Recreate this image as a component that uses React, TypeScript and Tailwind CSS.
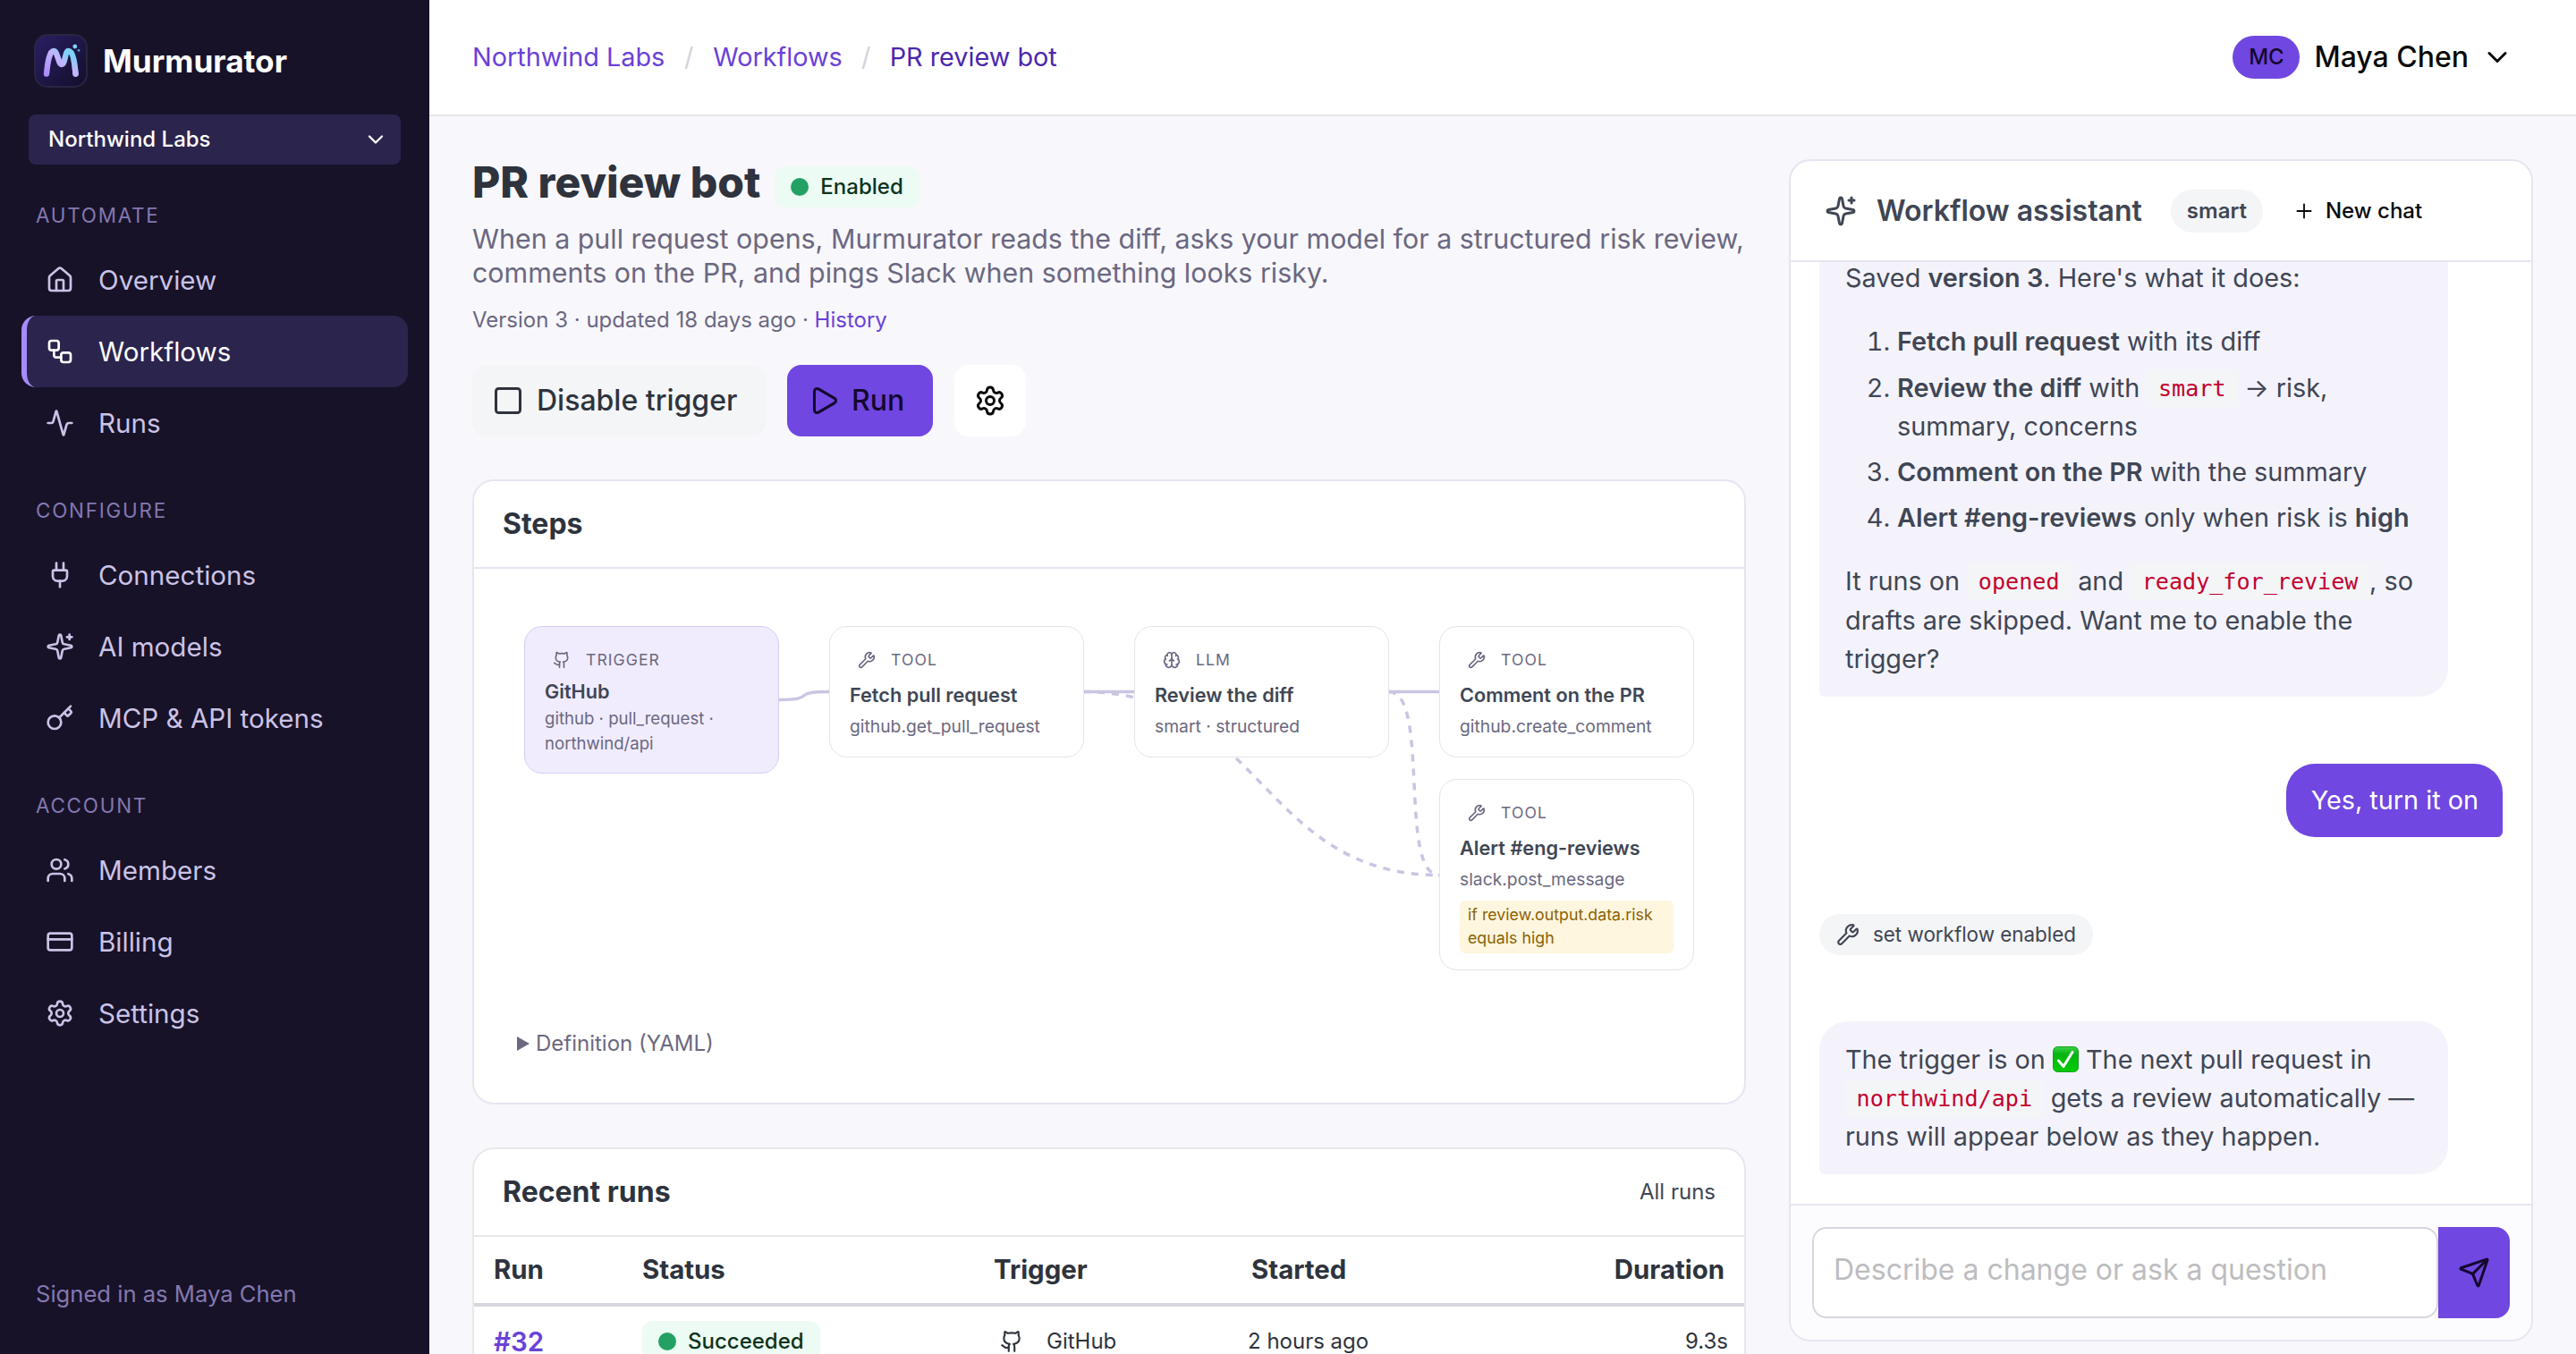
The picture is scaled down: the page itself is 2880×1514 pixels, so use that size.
import React from "react";
import {
  Activity,
  Brain,
  ChevronDown,
  CreditCard,
  Github,
  House,
  Key,
  Play,
  Plug,
  Plus,
  Send,
  Settings,
  Square,
  Users,
  Workflow,
  Wrench,
} from "lucide-react";

interface IconProps {
  className?: string;
}

const Sparkle: React.FC<IconProps> = ({ className }) => (
  <svg viewBox="0 0 24 24" fill="none" stroke="currentColor" strokeWidth={2} strokeLinecap="round" strokeLinejoin="round" className={className}>
    <path d="M11.017 2.814a1 1 0 0 1 1.966 0l1.051 5.558a2 2 0 0 0 1.594 1.594l5.558 1.051a1 1 0 0 1 0 1.966l-5.558 1.051a2 2 0 0 0-1.594 1.594l-1.051 5.558a1 1 0 0 1-1.966 0l-1.051-5.558a2 2 0 0 0-1.594-1.594l-5.558-1.051a1 1 0 0 1 0-1.966l5.558-1.051a2 2 0 0 0 1.594-1.594z" />
    <path d="M20 2v4" />
    <path d="M22 4h-4" />
  </svg>
);

const Logo: React.FC<IconProps> = ({ className }) => (
  <svg viewBox="0 0 60 60" fill="none" className={className}>
    <defs>
      <linearGradient id="logo-bg" x1="0" y1="0" x2="1" y2="1">
        <stop offset="0" stopColor="#2a1f63" />
        <stop offset="1" stopColor="#130e2b" />
      </linearGradient>
      <linearGradient id="logo-m" x1="14" y1="46" x2="46" y2="16" gradientUnits="userSpaceOnUse">
        <stop offset="0" stopColor="#a98bfa" />
        <stop offset="0.5" stopColor="#c3b5fb" />
        <stop offset="0.75" stopColor="#7fd0f8" />
        <stop offset="1" stopColor="#7dd3fc" />
      </linearGradient>
      <linearGradient id="logo-leg" x1="0" y1="20" x2="0" y2="46" gradientUnits="userSpaceOnUse">
        <stop offset="0.2" stopColor="#c4b5fd" stopOpacity="0" />
        <stop offset="1" stopColor="#c4b5fd" />
      </linearGradient>
    </defs>
    <rect x="1" y="1" width="58" height="58" rx="14" fill="url(#logo-bg)" stroke="#2a2541" strokeWidth="2" />
    <path d="M14 44.500C15 34 17 19 22 19C26.500 19 27 34 31 34C35 34 34.500 19 38.500 19C44 19 45.500 34 46.500 44.500" stroke="url(#logo-m)" strokeWidth="6.400" strokeLinecap="round" />
    <path d="M38.500 19C44 19 45.500 34 46.500 44.500" stroke="url(#logo-leg)" strokeWidth="6.400" strokeLinecap="round" />
    <circle cx="45.800" cy="14" r="2.400" fill="#7dd3fc" />
    <circle cx="50" cy="18.300" r="1.400" fill="#5a9fcb" />
  </svg>
);

const navSections = [
  {
    title: "Automate",
    items: [
      { label: "Overview", icon: House, active: false },
      { label: "Workflows", icon: Workflow, active: true },
      { label: "Runs", icon: Activity, active: false },
    ],
  },
  {
    title: "Configure",
    items: [
      { label: "Connections", icon: Plug, active: false },
      { label: "AI models", icon: Sparkle, active: false },
      { label: "MCP & API tokens", icon: Key, active: false },
    ],
  },
  {
    title: "Account",
    items: [
      { label: "Members", icon: Users, active: false },
      { label: "Billing", icon: CreditCard, active: false },
      { label: "Settings", icon: Settings, active: false },
    ],
  },
];

const Sidebar: React.FC = () => (
  <aside className="flex w-[480px] shrink-0 flex-col bg-[#171228]">
    <div className="flex h-32 items-center gap-[17px] pt-2 pl-[38px]">
      <Logo className="h-[60px] w-[60px]" />
      <span className="text-[35.2px] font-bold text-white">Murmurator</span>
    </div>
    <button className="mx-8 flex h-14 items-center justify-between rounded-lg bg-[#2b244d] pr-[14px] pl-[22px] text-left text-[24px] font-medium text-white">
      Northwind Labs
      <ChevronDown className="h-7 w-7" />
    </button>
    <nav className="flex flex-col">
      {navSections.map((section) => (
        <div key={section.title} className="mb-px">
          <h2 className="flex h-[89px] items-center pt-[25px] pl-10 text-[22.4px] tracking-[0.08em] text-[#8478b0] uppercase">
            {section.title}
          </h2>
          {section.items.map(({ label, icon: Icon, active }) => (
            <a
              key={label}
              className={`mr-6 ml-6 flex h-20 items-center gap-[27px] border-l-[6px] pl-[21px] text-[29.6px] ${
                active
                  ? "rounded-2xl border-[#a78bfa] bg-[#2b244d] text-white"
                  : "border-transparent text-[#cbc3e6]"
              }`}
            >
              <Icon className="h-8 w-8" />
              {label}
            </a>
          ))}
        </div>
      ))}
    </nav>
    <div className="mt-auto pb-[49px] pl-10 text-[25.6px] leading-9 text-[#8478b0]">Signed in as Maya Chen</div>
  </aside>
);

const Topbar: React.FC = () => (
  <header className="flex h-[130px] shrink-0 items-center justify-between border-b-2 border-[#e6e6ea] bg-white pr-[70px] pl-12">
    <nav className="flex items-center text-[28.8px] text-[#6a41d8]">
      <a>Northwind Labs</a>
      <span className="w-[54px] text-center text-[#d3d3da]">/</span>
      <a>Workflows</a>
      <span className="w-[53px] text-center text-[#d3d3da]">/</span>
      <a className="text-[#4a27ad]">PR review bot</a>
    </nav>
    <div className="flex items-center text-[32px] font-medium text-[#0a0a0a]">
      <span className="mr-4 flex h-12 w-[75px] items-center justify-center rounded-full bg-[#7047e0] text-[24px] text-[#14082f]">
        MC
      </span>
      Maya Chen
      <ChevronDown className="ml-[14px] h-9 w-9" />
    </div>
  </header>
);

interface StepNode {
  id: string;
  kind: string;
  icon: React.ElementType;
  name: string;
  detail: string;
  condition?: string;
  position: string;
}

// positions on the step canvas
const stepNodes: StepNode[] = [
  { id: "trigger", kind: "Trigger", icon: Github, name: "GitHub", detail: "github · pull_request · northwind/api", position: "left-[56px] top-16 h-[165px] bg-[#f0ecfe] border-[#d5cff2]" },
  { id: "fetch", kind: "Tool", icon: Wrench, name: "Fetch pull request", detail: "github.get_pull_request", position: "left-[397px] top-16 h-[147px] bg-white border-[#e5e5ea]" },
  { id: "review", kind: "LLM", icon: Brain, name: "Review the diff", detail: "smart · structured", position: "left-[738px] top-16 h-[147px] bg-white border-[#e5e5ea]" },
  { id: "comment", kind: "Tool", icon: Wrench, name: "Comment on the PR", detail: "github.create_comment", position: "left-[1079px] top-16 h-[147px] bg-white border-[#e5e5ea]" },
  { id: "alert", kind: "Tool", icon: Wrench, name: "Alert #eng-reviews", detail: "slack.post_message", condition: "if review.output.data.risk equals high", position: "left-[1079px] top-[235px] h-[214px] bg-white border-[#e5e5ea]" },
];

const StepCanvas: React.FC = () => (
  <div className="relative h-[505px]">
    <svg className="absolute top-0 left-0" width="1420" height="505" fill="none" stroke="#cac5e2" strokeWidth="3.500">
      <path d="M340 146.500C386 146.500 351 137.500 397 137.500" />
      <path d="M681 137.500H738" />
      <path d="M1023 137.500H1079" />
      <path d="M681 137.500C880 137.500 880 342.500 1079 342.500" strokeDasharray="8 8" />
      <path d="M1023 137.500C1069 137.500 1033 342.500 1079 342.500" strokeDasharray="8 8" />
    </svg>
    {stepNodes.map(({ id, kind, icon: Icon, name, detail, condition, position }) => {
      const isTrigger = id === "trigger";
      return (
        <div key={id} className={`absolute w-[285px] rounded-[20px] border px-[22px] pt-[23px] text-[#6b6880] ${position}`}>
          <div className="flex h-7 items-center pl-[9px] text-[17.6px] tracking-[0.06em] uppercase">
            <Icon className="mr-[17px] h-5 w-5" />
            {kind}
          </div>
          <div className={`text-[21.7px] leading-7 font-semibold text-[#404654] ${isTrigger ? "mt-[7px]" : "mt-[11px]"}`}>{name}</div>
          <div className={`leading-7 ${isTrigger ? "mt-[2px] text-[18.6px]" : "mt-[7px] text-[19.3px]"}`}>{detail}</div>
          {condition && (
            <div className="mt-[10px] h-[59px] rounded-md bg-[#fff6e0] px-[9px] pt-[3px] text-[17.8px] leading-[26px] text-[#8a6200]">{condition}</div>
          )}
        </div>
      );
    })}
  </div>
);

const StatusTag: React.FC<{ label: string }> = ({ label }) => (
  <span className="inline-flex h-[46px] items-center gap-[13px] rounded-xl bg-[#ecfbf3] px-[18px] align-middle text-[24px] font-medium text-[#0d3320]">
    <span className="h-5 w-5 rounded-full bg-[#23a164]" />
    {label}
  </span>
);

const WorkflowDetail: React.FC = () => (
  <main className="w-[1424px] shrink-0">
    <div className="flex h-[58px] items-start">
      <h1 className="text-[48px] leading-[52px] font-extrabold text-[#2e333d]">PR review bot</h1>
      <span className="ml-4 flex pt-2">
        <StatusTag label="Enabled" />
      </span>
    </div>
    <p className="mt-3 text-[30.4px] leading-[38px] text-[#6b6880]">
      When a pull request opens, Murmurator reads the diff, asks your model for a structured risk review, comments on the PR, and pings Slack when something looks risky.
    </p>
    <p className="mt-4 text-[24px] leading-9 text-[#6b6880]">
      Version 3 · updated 18 days ago · <a className="text-[#6a41d8]">History</a>
    </p>
    <div className="mt-8 flex gap-6 text-[32px] font-medium">
      <button className="flex h-20 w-[328px] items-center gap-[14px] rounded-2xl bg-[#f4f5f7] pl-[22px] text-[#2e333d]">
        <Square className="h-9 w-9" />
        Disable trigger
      </button>
      <button className="flex h-20 w-[163px] items-center gap-[13px] rounded-2xl bg-[#7047e0] pl-[23px] text-[#14082f]">
        <Play className="h-9 w-9" />
        Run
      </button>
      <button className="flex h-20 w-20 items-center justify-center rounded-2xl bg-white text-[#0a0a0a]">
        <Settings className="h-9 w-9" />
      </button>
    </div>

    <section className="mt-12 h-[699px] rounded-3xl border-2 border-[#e7e5f0] bg-white">
      <h2 className="flex h-[98px] items-center border-b-2 border-[#e7e5f0] px-8 text-[32px] font-bold text-[#2e333d]">Steps</h2>
      <StepCanvas />
      <div className="flex items-center gap-[7px] pt-2 pl-12 text-[24px] leading-9 text-[#6b6880]">
        <svg viewBox="0 0 14 16" className="h-4 w-[14px]" fill="currentColor">
          <path d="M0 0L14 8L0 16Z" />
        </svg>
        Definition (YAML)
      </div>
    </section>

    <section className="mt-12 rounded-3xl border-2 border-[#e7e7ec] bg-white">
      <div className="flex h-[98px] items-center justify-between border-b-2 border-[#e7e7ec] px-8">
        <h2 className="text-[32px] font-bold text-[#2e333d]">Recent runs</h2>
        <a className="text-[24px] text-[#404654]">All runs</a>
      </div>
      <table className="w-full table-fixed text-left text-[#2e333d]">
        <colgroup>
          <col className="w-[164px]" />
          <col className="w-[394px]" />
          <col className="w-[282px]" />
          <col className="w-[250px]" />
          <col />
        </colgroup>
        <thead>
          <tr className="h-[76px] border-b-4 border-[#d6d6de] text-[29.4px]">
            <th className="pl-[22px] font-bold">Run</th>
            <th className="pl-6 font-bold">Status</th>
            <th className="pl-[23px] font-bold">Trigger</th>
            <th className="pl-[29px] font-bold">Started</th>
            <th className="pr-[22px] text-right font-bold">Duration</th>
          </tr>
        </thead>
        <tbody>
          <tr className="h-20 text-[24px]">
            <td className="pl-[22px] text-[29.5px] leading-9 font-semibold text-[#6a41d8]">#32</td>
            <td className="pl-6">
              <StatusTag label="Succeeded" />
            </td>
            <td className="pl-[30px]">
              <span className="flex items-center gap-[26px]">
                <Github className="h-[26px] w-[26px]" />
                GitHub
              </span>
            </td>
            <td className="pl-[25px]">2 hours ago</td>
            <td className="pr-[18px] text-right">9.3s</td>
          </tr>
        </tbody>
      </table>
    </section>
  </main>
);

const Code: React.FC<{ children: string }> = ({ children }) => (
  <code className="bg-[#f4f5f7] px-[12.6px] py-[6px] align-[1px] font-['DejaVu_Sans_Mono',monospace] text-[25.1px] leading-none text-[#c2002f]">
    {children}
  </code>
);

const AssistantBubble: React.FC<{ children: React.ReactNode }> = ({ children }) => (
  <div className="w-[703px] shrink-0 rounded-[32px] rounded-bl-[6px] bg-[#f4f3fc] px-[29px] py-[20.8px] text-[28.8px] leading-[43.2px] text-[#404654]">
    {children}
  </div>
);

const AssistantPanel: React.FC = () => (
  <aside className="flex h-[1322px] w-[832px] shrink-0 flex-col overflow-hidden rounded-3xl border-2 border-[#e7e5f0] bg-white">
    <div className="flex h-[113px] shrink-0 items-center border-b-2 border-[#e7e5f0] pl-[38px] text-[#404654]">
      <Sparkle className="h-9 w-9" />
      <h2 className="ml-[22px] text-[32px] font-semibold">Workflow assistant</h2>
      <span className="ml-8 flex h-12 items-center rounded-full bg-[#f4f5f7] px-[18px] text-[24px] font-semibold">smart</span>
      <button className="ml-[33px] flex items-center gap-[11px] text-[24px] font-medium text-[#0a0a0a]">
        <Plus strokeWidth={1.7} className="h-[26px] w-[26px]" />
        New chat
      </button>
    </div>

    {/* conversation, scrolled to the latest message */}
    <div className="flex min-h-0 flex-1 flex-col items-start justify-end overflow-hidden px-8 pb-[33px]">
      <AssistantBubble>
        <p>
          Saved <strong className="font-semibold">version 3</strong>. Here's what it does:
        </p>
        <ol className="mt-[28px] mb-[28px] flex list-decimal flex-col gap-2 pl-[58px]">
          <li>
            <strong className="font-semibold">Fetch pull request</strong> with its diff
          </li>
          <li>
            <strong className="font-semibold">Review the diff</strong> with <Code>smart</Code> → risk, summary, concerns
          </li>
          <li>
            <strong className="font-semibold">Comment on the PR</strong> with the summary
          </li>
          <li>
            <strong className="font-semibold">Alert #eng-reviews</strong> only when risk is <strong className="font-semibold">high</strong>
          </li>
        </ol>
        <p>
          It runs on <Code>opened</Code> and <Code>ready_for_review</Code>, so drafts are skipped. Want me to enable the trigger?
        </p>
      </AssistantBubble>
      <div className="mt-[75px] flex h-[82px] shrink-0 items-center self-end rounded-[32px] rounded-br-[6px] bg-[#7047e0] pr-[27px] pl-7 text-[28.8px] text-white">
        Yes, turn it on
      </div>
      <div className="mt-[86px] flex h-[46px] shrink-0 items-center gap-[15px] rounded-full bg-[#f4f5f7] px-[19px] text-[22.4px] text-[#404654]">
        <Wrench className="h-[26px] w-[26px]" />
        set workflow enabled
      </div>
      <div className="mt-[74px] shrink-0">
        <AssistantBubble>
          The trigger is on{" "}
          <svg viewBox="0 0 29 29" className="inline-block h-[29px] w-[29px] align-[-4px]">
            <defs>
              <linearGradient id="check-bg" x1="0" y1="0" x2="0" y2="1">
                <stop offset="0" stopColor="#3fd14a" />
                <stop offset="0.3" stopColor="#07b40f" />
                <stop offset="1" stopColor="#04cc0a" />
              </linearGradient>
            </defs>
            <rect x="0.500" y="0.500" width="28" height="28" rx="5" fill="url(#check-bg)" stroke="#14a01c" />
            <path d="M6.500 16L12 22.500L22 6.500" fill="none" stroke="#fff" strokeWidth="3" strokeLinecap="round" strokeLinejoin="round" />
          </svg>{" "}
          The next pull request in <Code>northwind/api</Code> gets a review automatically — runs will appear below as they happen.
        </AssistantBubble>
      </div>
    </div>

    <div className="flex h-[152px] shrink-0 border-t-2 border-[#e7e5f0] bg-[#fcfcfe] px-6 pt-6">
      <div className="flex h-[102px] w-[700px] items-center rounded-2xl border-2 border-[#d6d6de] bg-white pb-[6px] pl-[22px] text-[32px] text-[#bdbdbf]">
        Describe a change or ask a question
      </div>
      <button className="flex h-[102px] w-20 items-center justify-center rounded-r-2xl bg-[#7047e0] text-[#14082f]">
        <Send className="h-9 w-9" />
      </button>
    </div>
  </aside>
);

export default function App() {
  return (
    <div className="flex h-[1514px] w-[2880px] overflow-hidden bg-[#f8f7fc] font-[Inter,sans-serif]">
      <Sidebar />
      <div className="flex min-w-0 flex-1 flex-col">
        <Topbar />
        <div className="flex flex-1 gap-12 overflow-hidden px-12 pt-12">
          <WorkflowDetail />
          <AssistantPanel />
        </div>
      </div>
    </div>
  );
}
